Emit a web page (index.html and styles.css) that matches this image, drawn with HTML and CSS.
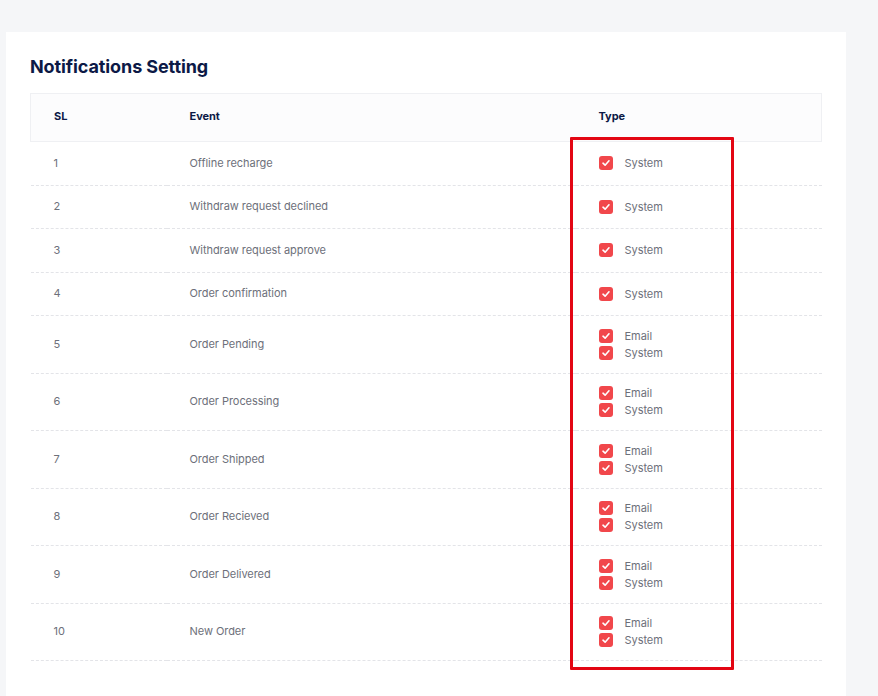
FILE: index.html
```html
<!DOCTYPE html>
<html lang="en">
<head>
<meta charset="utf-8">
<title>Notifications Setting</title>
<link rel="stylesheet" href="styles.css">
</head>
<body>
<div class="page">
  <section class="card">
    <h1 class="title">Notifications Setting</h1>
    <div class="table-wrap">
      <table class="table">
        <thead>
          <tr><th class="c-sl">SL</th><th class="c-ev">Event</th><th class="c-ty">Type</th></tr>
        </thead>
        <tbody>
          <tr><td>1</td><td>Offline recharge</td><td><div class="types"><label class="chk"><span class="box"><svg viewBox="0 0 14 14"><path d="M4 7.2 L6.1 9.2 L10 4.8"/></svg></span>System</label></div></td></tr>
          <tr><td>2</td><td>Withdraw request declined</td><td><div class="types"><label class="chk"><span class="box"><svg viewBox="0 0 14 14"><path d="M4 7.2 L6.1 9.2 L10 4.8"/></svg></span>System</label></div></td></tr>
          <tr><td>3</td><td>Withdraw request approve</td><td><div class="types"><label class="chk"><span class="box"><svg viewBox="0 0 14 14"><path d="M4 7.2 L6.1 9.2 L10 4.8"/></svg></span>System</label></div></td></tr>
          <tr><td>4</td><td>Order confirmation</td><td><div class="types"><label class="chk"><span class="box"><svg viewBox="0 0 14 14"><path d="M4 7.2 L6.1 9.2 L10 4.8"/></svg></span>System</label></div></td></tr>
          <tr><td>5</td><td>Order Pending</td><td><div class="types"><label class="chk"><span class="box"><svg viewBox="0 0 14 14"><path d="M4 7.2 L6.1 9.2 L10 4.8"/></svg></span>Email</label><label class="chk"><span class="box"><svg viewBox="0 0 14 14"><path d="M4 7.2 L6.1 9.2 L10 4.8"/></svg></span>System</label></div></td></tr>
          <tr><td>6</td><td>Order Processing</td><td><div class="types"><label class="chk"><span class="box"><svg viewBox="0 0 14 14"><path d="M4 7.2 L6.1 9.2 L10 4.8"/></svg></span>Email</label><label class="chk"><span class="box"><svg viewBox="0 0 14 14"><path d="M4 7.2 L6.1 9.2 L10 4.8"/></svg></span>System</label></div></td></tr>
          <tr><td>7</td><td>Order Shipped</td><td><div class="types"><label class="chk"><span class="box"><svg viewBox="0 0 14 14"><path d="M4 7.2 L6.1 9.2 L10 4.8"/></svg></span>Email</label><label class="chk"><span class="box"><svg viewBox="0 0 14 14"><path d="M4 7.2 L6.1 9.2 L10 4.8"/></svg></span>System</label></div></td></tr>
          <tr><td>8</td><td>Order Recieved</td><td><div class="types"><label class="chk"><span class="box"><svg viewBox="0 0 14 14"><path d="M4 7.2 L6.1 9.2 L10 4.8"/></svg></span>Email</label><label class="chk"><span class="box"><svg viewBox="0 0 14 14"><path d="M4 7.2 L6.1 9.2 L10 4.8"/></svg></span>System</label></div></td></tr>
          <tr><td>9</td><td>Order Delivered</td><td><div class="types"><label class="chk"><span class="box"><svg viewBox="0 0 14 14"><path d="M4 7.2 L6.1 9.2 L10 4.8"/></svg></span>Email</label><label class="chk"><span class="box"><svg viewBox="0 0 14 14"><path d="M4 7.2 L6.1 9.2 L10 4.8"/></svg></span>System</label></div></td></tr>
          <tr><td>10</td><td>New Order</td><td><div class="types"><label class="chk"><span class="box"><svg viewBox="0 0 14 14"><path d="M4 7.2 L6.1 9.2 L10 4.8"/></svg></span>Email</label><label class="chk"><span class="box"><svg viewBox="0 0 14 14"><path d="M4 7.2 L6.1 9.2 L10 4.8"/></svg></span>System</label></div></td></tr>
        </tbody>
      </table>
      <div class="highlight"></div>
    </div>
  </section>
</div>
</body>
</html>
```

FILE: styles.css
```css
* { box-sizing: border-box; }
html, body { margin: 0; padding: 0; }
body {
  background: #f5f6f8;
  font-family: "Inter", "Lato", sans-serif;
  color: #6d707a;
  overflow: hidden;
}
.page {
  padding: 32px 0 0 6px;
}
.card {
  width: 840px;
  min-height: 664px;
  background: #ffffff;
  padding: 22px 24px 30px 24px;
}
.title {
  margin: 0 0 13px 0;
  font-size: 18px;
  line-height: 26px;
  font-weight: 700;
  color: #0c1946;
  letter-spacing: -0.1px;
}
.table-wrap {
  position: relative;
}
.table {
  width: 792px;
  border-collapse: collapse;
  table-layout: fixed;
  font-size: 11px;
  letter-spacing: -0.05px;
}
.table th {
  height: 48px;
  background: #fcfcfd;
  border-top: 1px solid #eff0f3;
  border-bottom: 1px solid #eff0f3;
  text-align: left;
  font-weight: 700;
  color: #0c1946;
  padding: 0 24px 4px 23px;
  font-size: 11px;
}
.table th:first-child { border-left: 1px solid #eff0f3; }
.table th:last-child { border-right: 1px solid #eff0f3; }
.c-sl { width: 136px; }
.c-ev { width: 409px; }
.table td {
  padding: 12.75px 24px 12.75px 23px;
  line-height: 17px;
  border-bottom: 1px dashed #e3e4e8;
  vertical-align: middle;
  color: #6d707a;
}
.types {
  display: flex;
  flex-direction: column;
  gap: 3px;
}
.chk {
  display: flex;
  align-items: center;
  gap: 12px;
  height: 14px;
  line-height: 14px;
  color: #6d707a;
}
.box {
  width: 14px;
  height: 14px;
  border-radius: 3px;
  background: #f1474b;
  display: inline-flex;
  flex: none;
}
.box svg {
  width: 14px;
  height: 14px;
}
.box path {
  fill: none;
  stroke: #ffffff;
  stroke-width: 1.6;
  stroke-linecap: round;
  stroke-linejoin: round;
}
.highlight {
  position: absolute;
  left: 540px;
  top: 44px;
  width: 164px;
  height: 533px;
  border: 3px solid #e30613;
  border-radius: 1px;
  pointer-events: none;
}
```
